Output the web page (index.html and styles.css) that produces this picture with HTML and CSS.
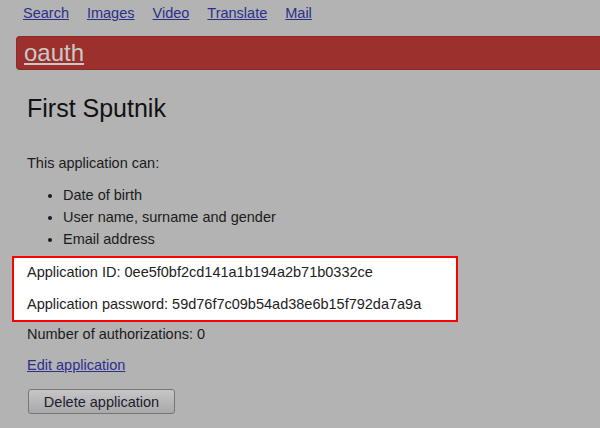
FILE: index.html
```html
<!DOCTYPE html>
<html>
<head>
<meta charset="utf-8">
<title>oauth</title>
<link rel="stylesheet" href="styles.css">
</head>
<body>
<nav class="nav">
  <a href="#">Search</a>
  <a href="#">Images</a>
  <a href="#">Video</a>
  <a href="#">Translate</a>
  <a href="#">Mail</a>
</nav>
<div class="bar"><a href="#" class="bar-link">oauth</a></div>
<main class="content">
  <h1 class="title">First Sputnik</h1>
  <p class="intro">This application can:</p>
  <ul class="perms">
    <li>Date of birth</li>
    <li>User name, surname and gender</li>
    <li>Email address</li>
  </ul>
  <div class="creds">
    <p class="cred">Application ID: 0ee5f0bf2cd141a1b194a2b71b0332ce</p>
    <p class="cred cred-pass">Application password: 59d76f7c09b54ad38e6b15f792da7a9a</p>
  </div>
  <p class="count">Number of authorizations: 0</p>
  <p class="edit"><a href="#">Edit application</a></p>
  <button class="delete" type="button">Delete application</button>
</main>
</body>
</html>
```
FILE: styles.css
```css
html, body {
  margin: 0;
  padding: 0;
}
body {
  background: #b3b3b3;
  font-family: "Liberation Sans", Arial, sans-serif;
  font-size: 14.5px;
  color: #1b1b1b;
  width: 600px;
  height: 428px;
  overflow: hidden;
}
a {
  color: #2b2f8c;
}
.nav {
  display: flex;
  gap: 18px;
  padding: 4px 0 0 23px;
  line-height: 18px;
}
.bar {
  margin: 14px 0 0 16px;
  height: 34px;
  box-sizing: border-box;
  background: #9b302c;
  border: 1px solid #8e2a26;
  border-right: none;
  border-radius: 4px 0 0 4px;
  padding-left: 7px;
  display: flex;
  align-items: center;
}
.bar-link {
  color: #c9c9c9;
  font-size: 24px;
  line-height: 28px;
}
.content {
  padding-left: 27px;
}
.title {
  margin: 23px 0 0;
  font-size: 25px;
  font-weight: normal;
  line-height: 30px;
  color: #111;
}
.intro {
  margin: 29px 0 0;
  line-height: 22px;
}
.perms {
  margin: 10px 0 0;
  padding-left: 36px;
  line-height: 22px;
}
.creds {
  margin: 6px 0 0 -15px;
  width: 446px;
  box-sizing: border-box;
  background: #fff;
  border: 2px solid #ff0000;
  padding: 3px 0 5px 13px;
}
.cred {
  margin: 0;
  line-height: 22px;
  color: #222;
}
.cred-pass {
  margin-top: 10px;
}
.count {
  margin: 1px 0 0;
  line-height: 22px;
}
.edit {
  margin: 9px 0 0;
  line-height: 22px;
}
.delete {
  margin: 13px 0 0 1px;
  width: 147px;
  height: 25px;
  font-family: "Liberation Sans", Arial, sans-serif;
  font-size: 14.5px;
  color: #1c1c30;
  background: linear-gradient(#c6c6c6, #a9a9a9);
  border: 1px solid #767676;
  border-radius: 3px;
  padding: 0;
}
```
